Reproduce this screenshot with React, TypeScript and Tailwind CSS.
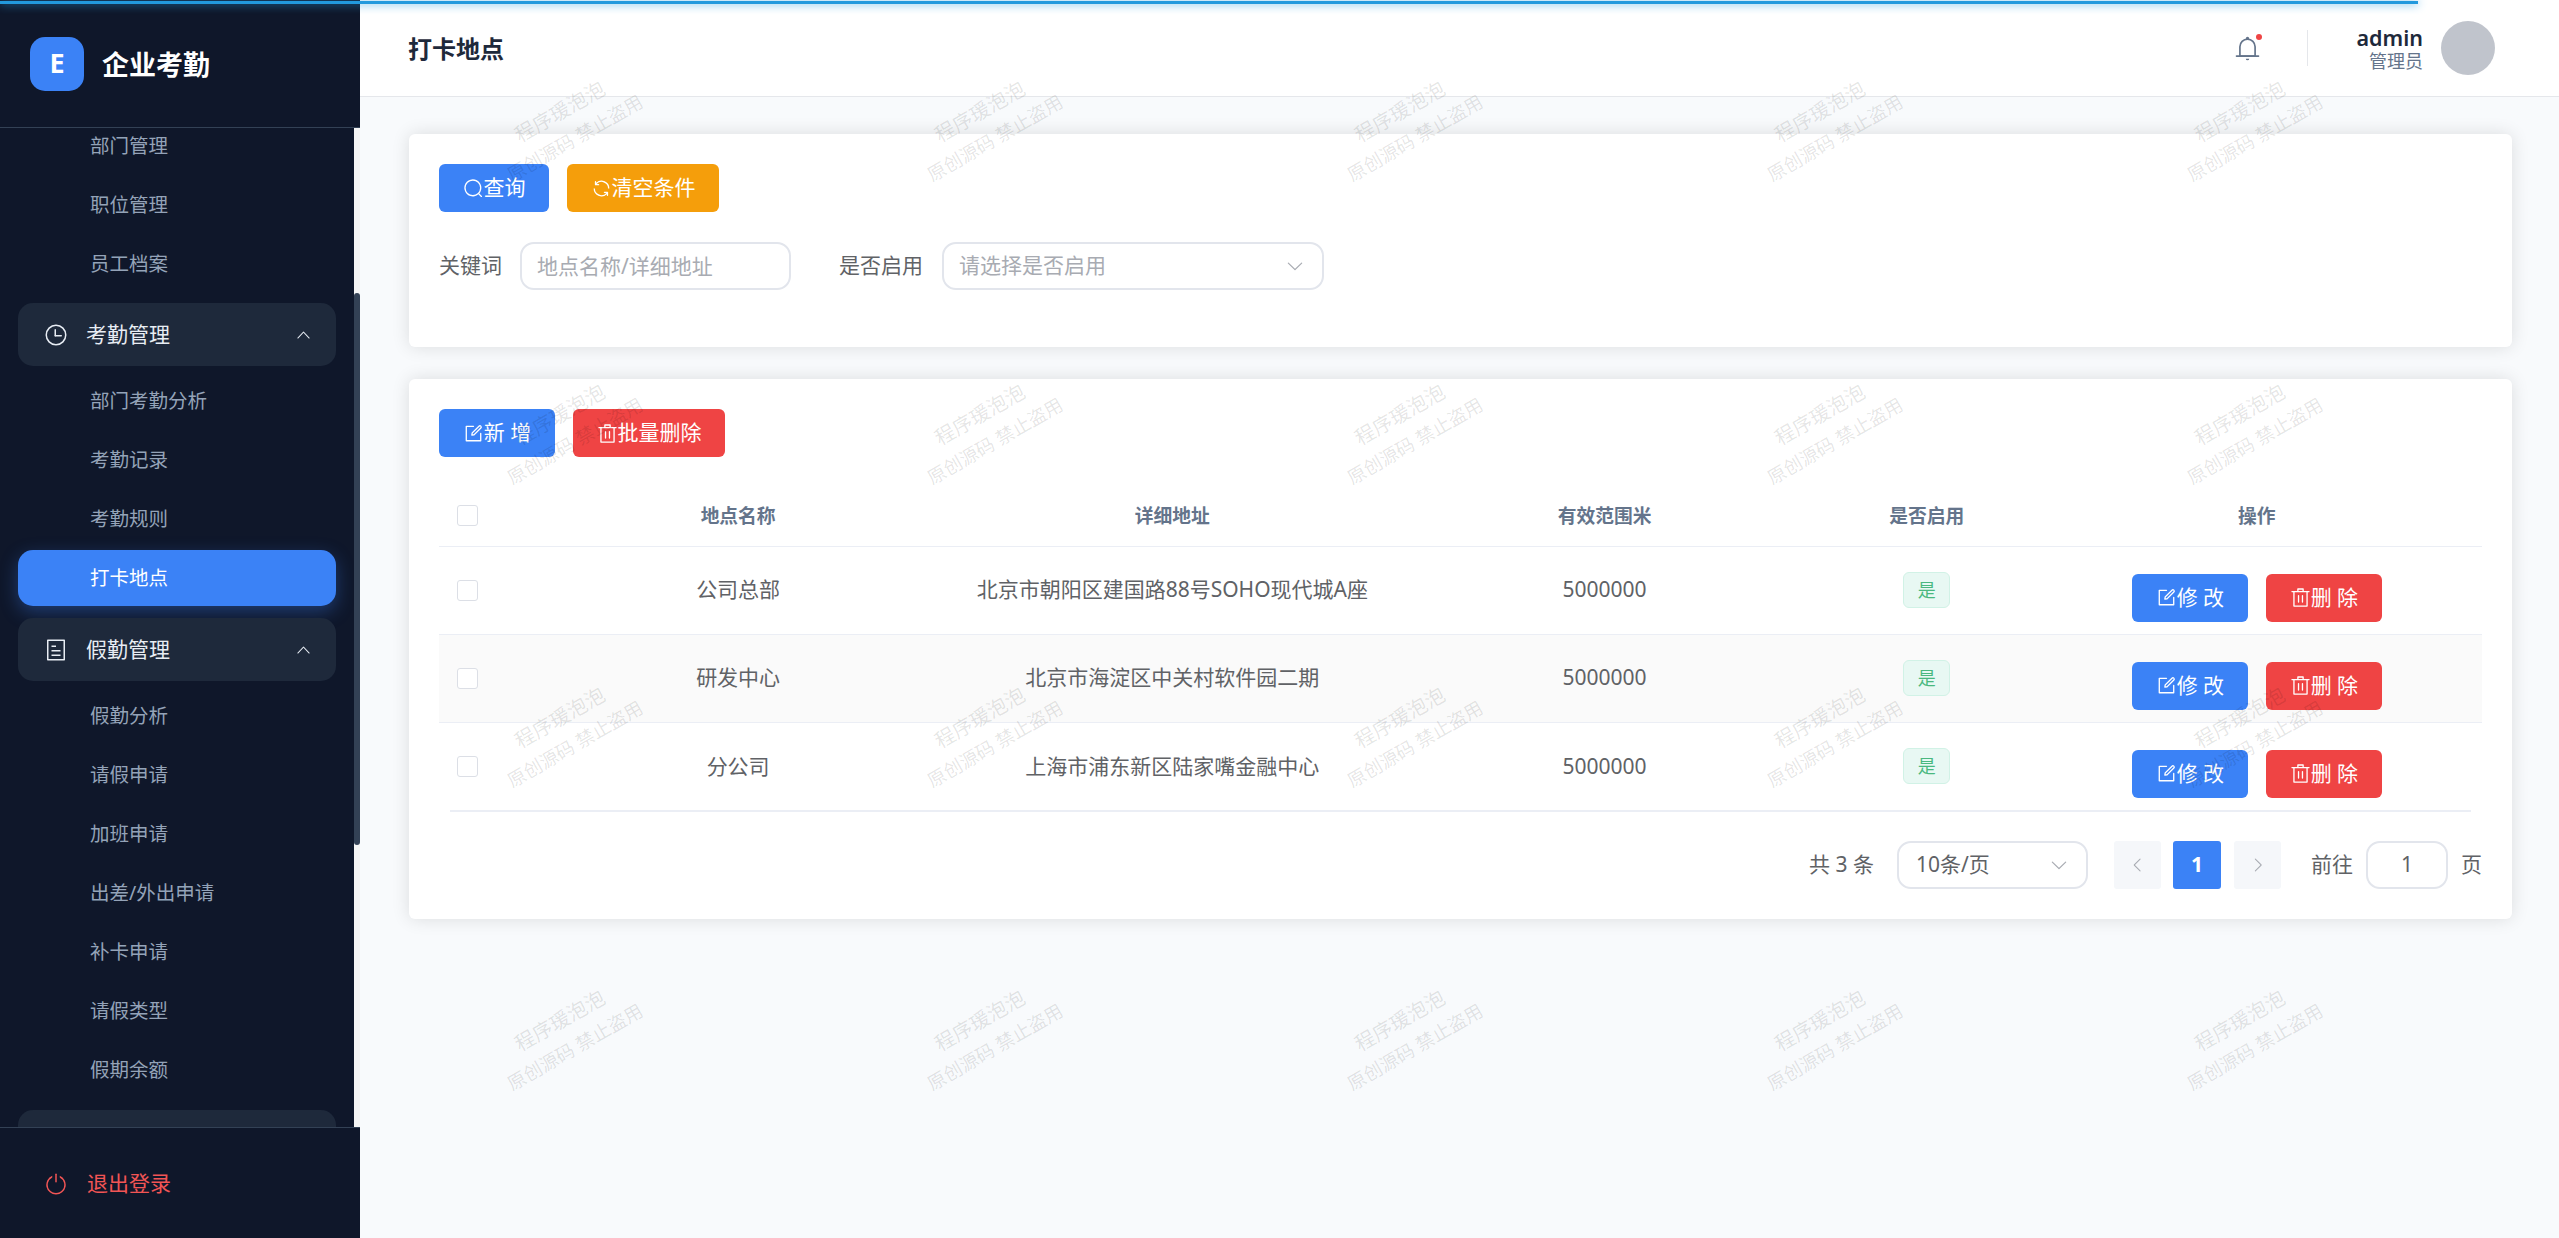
import type { ReactNode } from "react";

const FONT = "font-['Noto_Sans','Noto_Sans_CJK_SC',sans-serif]";

const icons: Record<string, string[]> = {
  search: [
    "m795.904 750.72 124.992 124.928a32 32 0 0 1-45.248 45.248L750.656 795.904a416 416 0 1 1 45.248-45.248zM480 832a352 352 0 1 0 0-704 352 352 0 0 0 0 704z",
  ],
  refresh: [
    "M771.776 794.88A384 384 0 0 1 128 512h64a320 320 0 0 0 555.712 216.448H654.72a32 32 0 1 1 0-64h149.056a32 32 0 0 1 32 32v148.928a32 32 0 1 1-64 0v-50.56zM276.288 295.616h92.992a32 32 0 0 1 0 64H220.16a32 32 0 0 1-32-32V178.56a32 32 0 0 1 64 0v50.56A384 384 0 0 1 896.128 512h-64a320 320 0 0 0-555.776-216.384z",
  ],
  edit: [
    "M832 512a32 32 0 1 1 64 0v352a32 32 0 0 1-32 32H160a32 32 0 0 1-32-32V160a32 32 0 0 1 32-32h352a32 32 0 0 1 0 64H192v640h640V512z",
    "m469.952 554.24 52.8-7.552L847.104 222.4a32 32 0 1 0-45.248-45.248L477.44 501.44l-7.552 52.8zm422.4-422.4a96 96 0 0 1 0 135.808l-331.84 331.84a32 32 0 0 1-18.112 9.088L436.8 623.68a32 32 0 0 1-36.224-36.224l15.104-105.6a32 32 0 0 1 9.024-18.112l331.904-331.84a96 96 0 0 1 135.744 0z",
  ],
  trash: [
    "M160 256H96a32 32 0 0 1 0-64h256V95.936a32 32 0 0 1 32-32h256a32 32 0 0 1 32 32V192h256a32 32 0 1 1 0 64h-64v672a32 32 0 0 1-32 32H192a32 32 0 0 1-32-32V256zm448-64v-64H416v64h192zM224 896h576V256H224v640zm192-128a32 32 0 0 1-32-32V416a32 32 0 0 1 64 0v320a32 32 0 0 1-32 32zm192 0a32 32 0 0 1-32-32V416a32 32 0 0 1 64 0v320a32 32 0 0 1-32 32z",
  ],
  bell: [
    "M512 64a64 64 0 0 1 64 64v64H448v-64a64 64 0 0 1 64-64z",
    "M256 768h512V448a256 256 0 1 0-512 0v320zm256-640a320 320 0 0 1 320 320v384H192V448a320 320 0 0 1 320-320z",
    "M96 768h832q32 0 32 32t-32 32H96q-32 0-32-32t32-32zm352 128h128a64 64 0 0 1-128 0z",
  ],
  clock: [
    "M512 896a384 384 0 1 0 0-768 384 384 0 0 0 0 768zm0 64a448 448 0 1 1 0-896 448 448 0 0 1 0 896z",
    "M480 256a32 32 0 0 1 32 32v256a32 32 0 0 1-64 0V288a32 32 0 0 1 32-32z",
    "M480 512h256q32 0 32 32t-32 32H480q-32 0-32-32t32-32z",
  ],
  tickets: [
    "M192 128v768h640V128H192zm-32-64h704a32 32 0 0 1 32 32v832a32 32 0 0 1-32 32H160a32 32 0 0 1-32-32V96a32 32 0 0 1 32-32zm160 448h384v64H320v-64zm0-192h192v64H320v-64zm0 384h384v64H320v-64z",
  ],
  power: [
    "M352 159.872V230.4a352 352 0 1 0 320 0v-70.528A416.128 416.128 0 0 1 512 960a416 416 0 0 1-160-800.128z",
    "M512 64q32 0 32 32v320q0 32-32 32t-32-32V96q0-32 32-32z",
  ],
  up: [
    "m488.832 344.32-339.84 356.672a32 32 0 0 0 0 44.16l.384.384a29.44 29.44 0 0 0 42.688 0l320-335.872 319.872 335.872a29.44 29.44 0 0 0 42.688 0l.384-.384a32 32 0 0 0 0-44.16L535.168 344.32a32 32 0 0 0-46.336 0z",
  ],
  down: [
    "M831.872 340.864 512 652.672 192.128 340.864a30.592 30.592 0 0 0-42.752 0 29.12 29.12 0 0 0 0 41.6L489.664 714.24a32 32 0 0 0 44.672 0l340.288-331.712a29.12 29.12 0 0 0 0-41.728 30.592 30.592 0 0 0-42.752 0z",
  ],
  left: [
    "M609.408 149.376 277.76 489.6a32 32 0 0 0 0 44.672l331.648 340.352a29.12 29.12 0 0 0 41.728 0 30.592 30.592 0 0 0 0-42.752L339.264 511.936l311.872-319.872a30.592 30.592 0 0 0 0-42.688 29.12 29.12 0 0 0-41.728 0z",
  ],
  right: [
    "M340.864 149.312a30.592 30.592 0 0 0 0 42.752L652.736 512 340.864 831.872a30.592 30.592 0 0 0 0 42.752 29.12 29.12 0 0 0 41.728 0L714.24 534.336a32 32 0 0 0 0-44.672L382.592 149.376a29.12 29.12 0 0 0-41.728 0z",
  ],
};

function Icon({ name, className }: { name: string; className?: string }) {
  return (
    <svg viewBox="0 0 1024 1024" fill="currentColor" className={className}>
      {icons[name].map((d) => (
        <path key={d} d={d} />
      ))}
    </svg>
  );
}

function Btn({ icon, label, color, className }: { icon: string; label: string; color: string; className: string }) {
  return (
    <button className={`flex h-[48px] items-center justify-center rounded-[6px] text-[21px] text-white ${color} ${className}`}>
      <Icon name={icon} className="h-[21px] w-[21px] shrink-0" />
      <span className="whitespace-pre">{label}</span>
    </button>
  );
}

function SubItem({ label, active, className }: { label: string; active?: boolean; className?: string }) {
  return (
    <div
      className={`mx-[18px] flex h-[56px] shrink-0 items-center rounded-[15px] pl-[72px] text-[19.5px] ${
        active ? "bg-[#3b82f6] text-white shadow-[0_6px_18px_rgba(59,130,246,0.35)]" : "text-[#94a3b8]"
      } ${className ?? ""}`}
    >
      {label}
    </div>
  );
}

function Group({ icon, label, className }: { icon: string; label: string; className?: string }) {
  return (
    <div className={`mx-[18px] flex h-[63px] shrink-0 items-center rounded-[15px] bg-[#1e293b] pl-[26px] pr-[24px] text-[21px] text-[#e8edf4] ${className ?? ""}`}>
      <Icon name={icon} className="h-[24px] w-[24px] shrink-0" />
      <span className="ml-[18px] flex-1">{label}</span>
      <Icon name="up" className="h-[17px] w-[17px]" />
    </div>
  );
}

function Sidebar() {
  return (
    <aside className="flex h-full w-[360px] shrink-0 flex-col bg-[#0f172a]">
      <div className="flex h-[128px] shrink-0 items-center border-b border-[#334155] pl-[30px]">
        <div className="flex h-[54px] w-[54px] items-center justify-center rounded-[15px] bg-[#3b82f6] text-[27px] font-bold text-white">
          E
        </div>
        <span className="ml-[18px] mt-[3px] text-[27px] font-bold text-white">企业考勤</span>
      </div>

      <div className="flex min-h-0 flex-1">
        {/* menu is scrolled, first row is cut by the header */}
        <nav className="flex min-w-0 flex-1 flex-col gap-[3px] overflow-hidden">
          <SubItem label="部门管理" className="-mt-[10px]" />
          <SubItem label="职位管理" />
          <SubItem label="员工档案" />
          <Group icon="clock" label="考勤管理" className="mt-[8px]" />
          <SubItem label="部门考勤分析" className="mt-[4px]" />
          <SubItem label="考勤记录" />
          <SubItem label="考勤规则" />
          <SubItem label="打卡地点" active />
          <Group icon="tickets" label="假勤管理" className="mt-[9px]" />
          <SubItem label="假勤分析" className="mt-[4px]" />
          <SubItem label="请假申请" />
          <SubItem label="加班申请" />
          <SubItem label="出差/外出申请" />
          <SubItem label="补卡申请" />
          <SubItem label="请假类型" />
          <SubItem label="假期余额" />
          <Group icon="clock" label="" className="mt-[9px]" />
        </nav>
        <div className="w-[6px] shrink-0 bg-[#f5f5f5]">
          <div className="mt-[165px] h-[552px] rounded-[3px] bg-[#334155]" />
        </div>
      </div>

      <div className="flex h-[111px] shrink-0 items-center border-t border-[#334155] pl-[44px] pt-[2px] text-[21px] text-[#f25555]">
        <Icon name="power" className="h-[24px] w-[24px]" />
        <span className="ml-[19px]">退出登录</span>
      </div>
    </aside>
  );
}

function Header() {
  return (
    <header className="flex h-[97px] shrink-0 items-center border-b border-[#e5e7eb] bg-white pl-[48px] pr-[64px]">
      <h1 className="mt-[2px] flex-1 text-[24px] font-bold text-[#1e293b]">打卡地点</h1>
      <div className="relative">
        <Icon name="bell" className="h-[27px] w-[27px] text-[#64748b]" />
        <span className="absolute right-[-1px] top-[-1px] h-[6px] w-[6px] rounded-full bg-[#ef4444]" />
      </div>
      <div className="ml-[46px] h-[36px] w-px bg-[#e5e7eb]" />
      <div className="ml-[49px] mt-[2px] flex w-[66px] flex-col items-end">
        <span className="text-[21.5px] font-semibold leading-[25px] text-[#1e293b]">admin</span>
        <span className="text-[18px] leading-[23px] text-[#64748b]">管理员</span>
      </div>
      <div className="ml-[18px] h-[54px] w-[54px] rounded-full bg-[#c0c4cc]" />
    </header>
  );
}

function SearchCard() {
  return (
    <section className="rounded-[6px] bg-white p-[30px] pb-[57px] shadow-[0_0_18px_rgba(0,0,0,0.12)]">
      <div className="flex gap-[18px]">
        <Btn icon="search" label="查询" color="bg-[#3b82f6]" className="w-[110px]" />
        <Btn icon="refresh" label="清空条件" color="bg-[#f59e0b]" className="w-[152px]" />
      </div>
      <div className="mt-[30px] flex items-center text-[21px] text-[#606266]">
        <span>关键词</span>
        <input
          placeholder="地点名称/详细地址"
          className="ml-[18px] h-[48px] w-[271px] rounded-[14px] border-2 border-[#e2e5ec] pl-[15px] text-[21px] outline-none placeholder:text-[#a8abb2]"
        />
        <span className="ml-[48px]">是否启用</span>
        <div className="ml-[19px] flex h-[48px] w-[382px] items-center justify-between rounded-[14px] border-2 border-[#e2e5ec] pl-[15px] pr-[17px] text-[21px] text-[#a8abb2]">
          <span>请选择是否启用</span>
          <Icon name="down" className="h-[20px] w-[20px]" />
        </div>
      </div>
    </section>
  );
}

const rows = [
  { name: "公司总部", address: "北京市朝阳区建国路88号SOHO现代城A座", range: "5000000" },
  { name: "研发中心", address: "北京市海淀区中关村软件园二期", range: "5000000" },
  { name: "分公司", address: "上海市浦东新区陆家嘴金融中心", range: "5000000" },
];

function Checkbox() {
  return <div className="ml-[18px] h-[21px] w-[21px] rounded-[3px] border border-[#dcdfe6] bg-white" />;
}

function Th({ children }: { children?: ReactNode }) {
  return <th className="border-b border-[#ebeef5] text-center text-[18.75px] font-bold text-[#64748b]">{children}</th>;
}

function DataTable() {
  return (
    <table className="mt-[29px] w-full table-fixed text-[21px] text-[#606266]">
      <colgroup>
        <col className="w-[80px]" />
        <col className="w-[438px]" />
        <col className="w-[430px]" />
        <col className="w-[434px]" />
        <col className="w-[210px]" />
        <col className="w-[450px]" />
      </colgroup>
      <thead>
        <tr className="h-[60px]">
          <th className="border-b border-[#ebeef5]">
            <Checkbox />
          </th>
          <Th>地点名称</Th>
          <Th>详细地址</Th>
          <Th>有效范围米</Th>
          <Th>是否启用</Th>
          <Th>操作</Th>
        </tr>
      </thead>
      <tbody>
        {rows.map((row, i) => (
          <tr key={row.name} className={`h-[88px] ${i === 1 ? "bg-[#fafafa]" : ""}`}>
            <td className={i < 2 ? "border-b border-[#ebeef5]" : ""}>
              <Checkbox />
            </td>
            <td className={`text-center ${i < 2 ? "border-b border-[#ebeef5]" : ""}`}>{row.name}</td>
            <td className={`text-center ${i < 2 ? "border-b border-[#ebeef5]" : ""}`}>{row.address}</td>
            <td className={`text-center ${i < 2 ? "border-b border-[#ebeef5]" : ""}`}>{row.range}</td>
            <td className={`text-center ${i < 2 ? "border-b border-[#ebeef5]" : ""}`}>
              <span className="inline-flex h-[36px] w-[47px] items-center justify-center rounded-[6px] border border-[#d1f2e6] bg-[#e8f8f3] text-[18px] text-[#4ab87f]">
                是
              </span>
            </td>
            <td className={`pt-[27px] align-top ${i < 2 ? "border-b border-[#ebeef5]" : ""}`}>
              <div className="flex justify-center gap-[18px]">
                <Btn icon="edit" label="修 改" color="bg-[#3b82f6]" className="w-[116px]" />
                <Btn icon="trash" label="删 除" color="bg-[#ef4444]" className="w-[116px]" />
              </div>
            </td>
          </tr>
        ))}
      </tbody>
    </table>
  );
}

function Pagination() {
  return (
    <div className="mt-[29px] flex items-center justify-end text-[21px] text-[#606266]">
      <span className="whitespace-pre">共 3 条</span>
      <div className="ml-[23px] flex h-[48px] w-[191px] items-center justify-between rounded-[14px] border-2 border-[#e2e5ec] pl-[17px] pr-[17px]">
        <span>10条/页</span>
        <Icon name="down" className="h-[20px] w-[20px] text-[#a8abb2]" />
      </div>
      <div className="ml-[26px] flex h-[48px] w-[47px] items-center justify-center rounded-[3px] bg-[#f5f7fa] text-[#a8abb2]">
        <Icon name="left" className="h-[18px] w-[18px]" />
      </div>
      <div className="ml-[12px] flex h-[48px] w-[48px] items-center justify-center rounded-[3px] bg-[#3b82f6] font-bold text-white">
        1
      </div>
      <div className="ml-[13px] flex h-[48px] w-[47px] items-center justify-center rounded-[3px] bg-[#f5f7fa] text-[#a8abb2]">
        <Icon name="right" className="h-[18px] w-[18px]" />
      </div>
      <span className="ml-[30px]">前往</span>
      <div className="ml-[13px] flex h-[48px] w-[82px] items-center justify-center rounded-[14px] border-2 border-[#e2e5ec]">1</div>
      <span className="ml-[13px]">页</span>
    </div>
  );
}

function TableCard() {
  return (
    <section className="mt-[32px] rounded-[6px] bg-white p-[30px] shadow-[0_0_18px_rgba(0,0,0,0.12)]">
      <div className="flex gap-[18px]">
        <Btn icon="edit" label="新 增" color="bg-[#3b82f6]" className="w-[116px]" />
        <Btn icon="trash" label="批量删除" color="bg-[#ef4444]" className="w-[152px]" />
      </div>
      <DataTable />
      <div className="mx-[11px] h-[2px] bg-[#ebeef5]" />
      <Pagination />
    </section>
  );
}

function Watermark() {
  const cells = Array.from({ length: 20 }, (_, i) => i);
  return (
    <div className="pointer-events-none absolute left-[357px] top-[-27px] grid grid-cols-[repeat(5,420px)] auto-rows-[303px]">
      {cells.map((i) => (
        <div key={i} className="flex items-center justify-center">
          <div className="flex -rotate-[30deg] flex-col items-center whitespace-pre leading-[30px] text-[rgba(0,0,0,0.11)]">
            <span className="text-[20px]">程序瑗泡泡</span>
            <span className="text-[18.5px]">原创源码 禁止盗用</span>
          </div>
        </div>
      ))}
    </div>
  );
}

export default function App() {
  return (
    <div className={`relative flex h-screen w-full overflow-hidden bg-[#f8fafc] ${FONT}`}>
      <Sidebar />
      <main className="flex min-w-0 flex-1 flex-col">
        <Header />
        <div className="pl-[49px] pr-[47px] pt-[37px]">
          <SearchCard />
          <TableCard />
        </div>
      </main>
      <Watermark />
      {/* route loading bar */}
      <div className="absolute left-0 top-[1px] h-[3px] w-[2418px] bg-[#2299dd] shadow-[0_0_10px_#2299dd]" />
    </div>
  );
}
